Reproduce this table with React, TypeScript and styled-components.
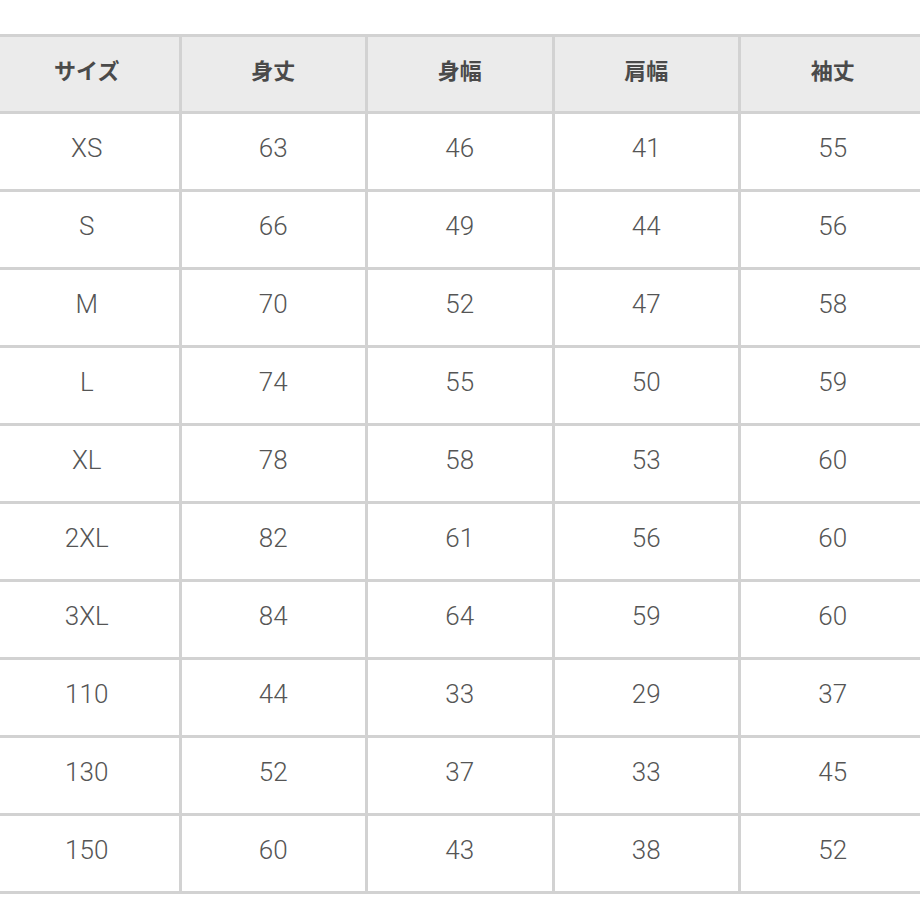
import React from "react";
import styled, { createGlobalStyle } from "styled-components";

const Global = createGlobalStyle`
  html, body { margin: 0; padding: 0; background: #ffffff; overflow: hidden; }
  body { font-family: "Liberation Sans", "Noto Sans CJK JP", sans-serif; }
`;

const Page = styled.div`
  width: 920px;
  height: 920px;
  overflow: hidden;
  padding-top: 34px;
  box-sizing: border-box;
`;

const Grid = styled.div`
  margin-left: -8px;
  width: 935.5px;
  display: grid;
  grid-template-columns: repeat(5, 183.5px);
  grid-template-rows: 74px;
  grid-auto-rows: 75px;
  gap: 3px;
  padding: 3px;
  box-sizing: border-box;
  background: #d2d2d2;
`;

const HeadCell = styled.div`
  background: #ebebeb;
  display: flex;
  align-items: center;
  justify-content: center;
  padding-bottom: 11px;
  box-sizing: border-box;
  font-family: "Noto Sans CJK JP", sans-serif;
  font-weight: 700;
  font-size: 22px;
  color: #4a4a4a;
`;

const Cell = styled.div`
  background: #ffffff;
  display: flex;
  align-items: center;
  justify-content: center;
  padding-bottom: 8px;
  box-sizing: border-box;
  font-family: "Roboto", "Liberation Sans", sans-serif;
  font-weight: 300;
  font-size: 26px;
  color: #555555;
`;

const headers = ["サイズ", "身丈", "身幅", "肩幅", "袖丈"];
const rows: string[][] = [
  ["XS", "63", "46", "41", "55"],
  ["S", "66", "49", "44", "56"],
  ["M", "70", "52", "47", "58"],
  ["L", "74", "55", "50", "59"],
  ["XL", "78", "58", "53", "60"],
  ["2XL", "82", "61", "56", "60"],
  ["3XL", "84", "64", "59", "60"],
  ["110", "44", "33", "29", "37"],
  ["130", "52", "37", "33", "45"],
  ["150", "60", "43", "38", "52"],
];

export default function App() {
  return (
    <>
      <Global />
      <Page>
        <Grid>
          {headers.map((h) => (
            <HeadCell key={h}>{h}</HeadCell>
          ))}
          {rows.map((r, i) =>
            r.map((v, j) => <Cell key={`${i}-${j}`}>{v}</Cell>)
          )}
        </Grid>
      </Page>
    </>
  );
}
